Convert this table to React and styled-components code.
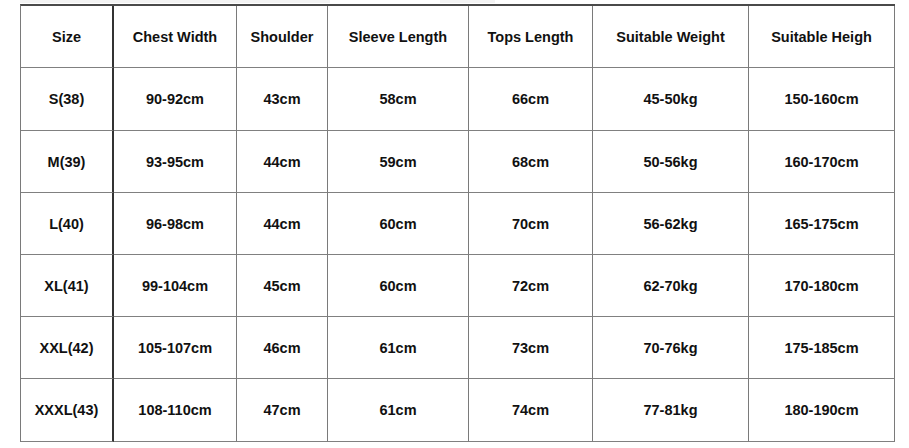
import styled, { createGlobalStyle } from 'styled-components';

const GlobalStyle = createGlobalStyle`
    body{
        margin: 0;
        background: #ffffff;
        font-family: 'Liberation Sans', Arial, sans-serif;
    }
`;

const headers = ["Size", "Chest Width", "Shoulder", "Sleeve Length", "Tops Length", "Suitable Weight", "Suitable Heigh"];

const rows = [
    ["S(38)", "90-92cm", "43cm", "58cm", "66cm", "45-50kg", "150-160cm"],
    ["M(39)", "93-95cm", "44cm", "59cm", "68cm", "50-56kg", "160-170cm"],
    ["L(40)", "96-98cm", "44cm", "60cm", "70cm", "56-62kg", "165-175cm"],
    ["XL(41)", "99-104cm", "45cm", "60cm", "72cm", "62-70kg", "170-180cm"],
    ["XXL(42)", "105-107cm", "46cm", "61cm", "73cm", "70-76kg", "175-185cm"],
    ["XXXL(43)", "108-110cm", "47cm", "61cm", "74cm", "77-81kg", "180-190cm"],
];

export default function App(){
    return(
        <>
            <GlobalStyle />
            <Page>
                <TopStrip />
                <SizeTable>
                    {headers.map((h, i) => (
                        <Cell key={h} first={i === 0}>{h}</Cell>
                    ))}
                    {rows.map((row) =>
                        row.map((value, i) => (
                            <Cell key={row[0] + i} first={i === 0}>{value}</Cell>
                        ))
                    )}
                </SizeTable>
            </Page>
        </>
    )
}

const Page = styled.div`
    width: 909px;
    height: 448px;
    padding-left: 20px;
    box-sizing: border-box;
    display: flex;
    flex-direction: column;
`;

const TopStrip = styled.div`
    width: 475px;
    height: 3px;
    background: linear-gradient(to right, #f3f3f3 0 310px, #ffffff 310px 420px, #f3f3f3 420px);
    margin-bottom: 1px;
`;

const SizeTable = styled.div`
    display: grid;
    grid-template-columns: 93px 123px 91px 141px 124px 156px 146px;
    grid-template-rows: 62px 63px 62px 62px 62px 62px 63px;
    width: fit-content;
    border-top: 2px solid #4a4a4a;
    border-left: 1px solid #7a7a7a;
`;

const Cell = styled.div`
    box-sizing: border-box;
    display: flex;
    align-items: center;
    justify-content: center;
    border-right: ${(p) => (p.first ? '2px solid #333333' : '1px solid #7a7a7a')};
    border-bottom: 1px solid #808080;
    font-size: 14.5px;
    font-weight: 700;
    color: #111111;
`;
